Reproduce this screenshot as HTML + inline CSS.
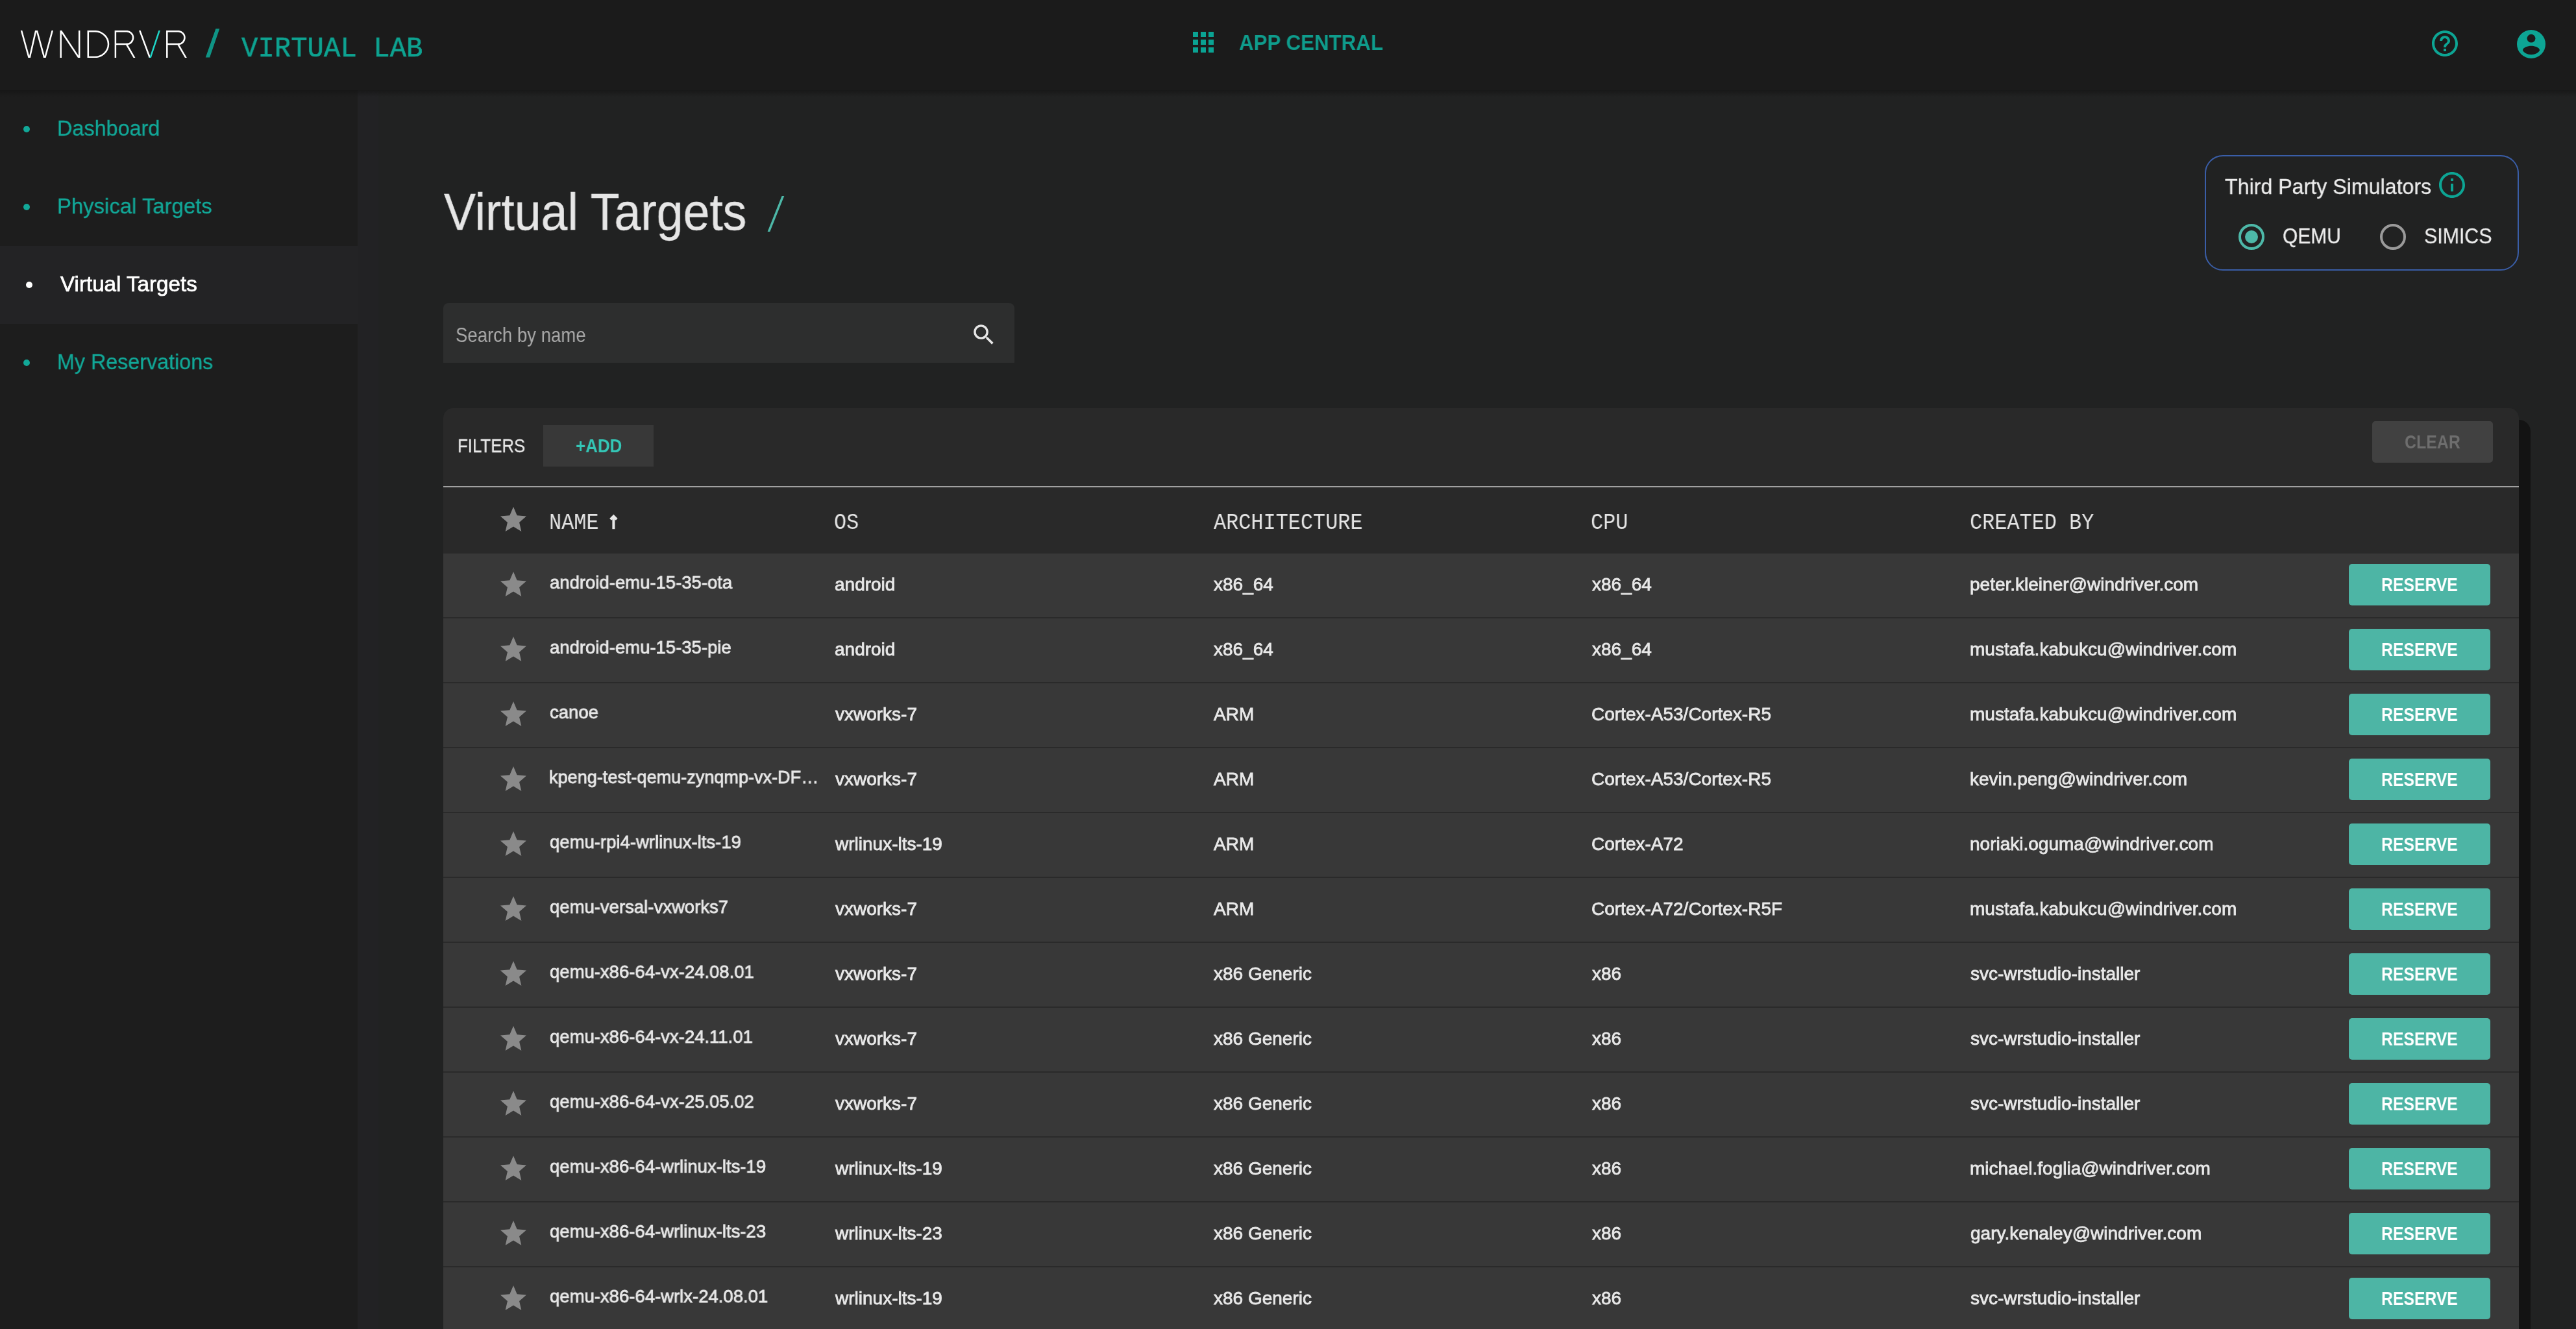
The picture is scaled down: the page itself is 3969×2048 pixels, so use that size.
<!DOCTYPE html>
<html>
<head>
<meta charset="utf-8">
<style>
*{margin:0;padding:0;box-sizing:border-box}
html,body{width:3969px;height:2048px;overflow:hidden;background:#212222;font-family:"Liberation Sans",sans-serif;color:#e8e8e8;position:relative}
.abs{position:absolute}
svg.abs{overflow:visible}
.t{position:absolute;white-space:nowrap;line-height:1;transform-origin:0 0;will-change:transform}
.row{position:absolute;left:683px;width:3198px;height:100px;background:#383838;border-bottom:2px solid #2a2a2a}
.btn{position:absolute;left:3619px;width:218px;height:64px;background:#4db5a5;border-radius:5px}
</style>
</head>
<body>
<!-- header -->
<div class="abs" style="left:0;top:0;width:3969px;height:139px;background:#1b1b1b"></div>
<svg class="abs" style="left:0;top:0" width="400" height="139" viewBox="0 0 400 139">
  <defs><clipPath id="lc"><rect x="0" y="46.9" width="300" height="42.2"/></clipPath></defs>
  <g clip-path="url(#lc)" fill="none" stroke="#ffffff" stroke-width="2.5" stroke-linejoin="miter" stroke-miterlimit="20">
    <path d="M32.2,44 L45.2,91 L56,44 L68.8,91 L81.6,44"/>
    <path d="M93.7,95 V47 L122.2,90 M122.2,95 V40"/>
    <path d="M135.8,48.2 H146 A21,19.9 0 0 1 146,88.0 H135.8 Z"/>
    <path d="M177.9,95 V48.2 H195.3 A9.8,9.9 0 0 1 195.3,68 H177.9 M194.2,67 L207.6,90"/>
    <path d="M214.2,44 L232,92"/>
    <path d="M257.3,95 V48.2 H274.7 A9.8,9.9 0 0 1 274.7,68 H257.3 M273.6,67 L287,90"/>
    <path d="M230.6,92 L246.6,44" stroke="#1fd6c8"/>
  </g>
  <polygon points="332.4,44.2 338.3,44.2 323.1,88.5 316.8,88.5" fill="#0f9485"/>
</svg>
<!-- apps grid icon -->
<svg class="abs" style="left:1837.6px;top:49px" width="32" height="32" viewBox="0 0 32 32" fill="#0aa393">
  <rect x="0" y="0" width="8" height="8"/><rect x="12" y="0" width="8" height="8"/><rect x="24" y="0" width="8" height="8"/>
  <rect x="0" y="12" width="8" height="8"/><rect x="12" y="12" width="8" height="8"/><rect x="24" y="12" width="8" height="8"/>
  <rect x="0" y="24" width="8" height="8"/><rect x="12" y="24" width="8" height="8"/><rect x="24" y="24" width="8" height="8"/>
</svg>
<!-- help icon -->
<svg class="abs" style="left:3743px;top:43px" width="48" height="48" viewBox="0 0 24 24"><path fill="#0da594" d="M11 18h2v-2h-2v2zm1-16C6.48 2 2 6.48 2 12s4.48 10 10 10 10-4.48 10-10S17.52 2 12 2zm0 18c-4.41 0-8-3.59-8-8s3.59-8 8-8 8 3.59 8 8-3.59 8-8 8zm0-14c-2.21 0-4 1.79-4 4h2c0-1.1.9-2 2-2s2 .9 2 2c0 2-3 1.75-3 5h2c0-2.25 3-2.5 3-5 0-2.21-1.79-4-4-4z"/></svg>
<!-- account icon -->
<svg class="abs" style="left:3872px;top:40px" width="56" height="56" viewBox="0 0 56 56">
  <circle cx="28" cy="28" r="22" fill="#0da594"/>
  <circle cx="28" cy="19.2" r="6.4" fill="#1b1b1b"/>
  <path d="M14.8,37 C18,28.5 38,28.5 41.2,37 C38,46.5 18,46.5 14.8,37 Z" fill="#1b1b1b"/>
</svg>
<!-- sidebar -->
<div class="abs" style="left:0;top:139px;width:551px;height:1909px;background:#1d1d1d"></div>
<div class="abs" style="left:0;top:379px;width:551px;height:120px;background:#232325"></div>
<div class="abs" style="left:551px;top:139px;width:32px;height:1909px;background:#222224"></div>
<div class="abs" style="left:0;top:139px;width:3969px;height:10px;background:linear-gradient(rgba(20,20,20,0.7),rgba(20,20,20,0))"></div>
<div class="abs" style="left:35.6px;top:193.6px;width:10.8px;height:10.8px;border-radius:50%;background:#12a898"></div>
<div class="abs" style="left:35.6px;top:313.6px;width:10.8px;height:10.8px;border-radius:50%;background:#12a898"></div>
<div class="abs" style="left:39.6px;top:433.6px;width:10.8px;height:10.8px;border-radius:50%;background:#ffffff"></div>
<div class="abs" style="left:35.6px;top:553.6px;width:10.8px;height:10.8px;border-radius:50%;background:#12a898"></div>
<!-- title slash -->
<svg class="abs" style="left:0;top:0" width="1300" height="400"><polygon points="1204.6,302 1208.3,302 1186.3,357 1182.6,357" fill="#4db8a8"/></svg>
<!-- search -->
<div class="abs" style="left:683px;top:467px;width:880px;height:92px;background:#2d2e2e;border-radius:8px 8px 0 0"></div>
<svg class="abs" style="left:1494.8px;top:495.4px" width="41.8" height="41.8" viewBox="0 0 24 24"><path fill="#e6e6e6" d="M15.5 14h-.79l-.28-.27C15.41 12.59 16 11.11 16 9.5 16 5.91 13.09 3 9.5 3S3 5.91 3 9.5 5.91 16 9.5 16c1.61 0 3.09-.59 4.23-1.57l.27.28v.79l5 4.99L20.49 19l-4.99-5zm-6 0C7.01 14 5 11.99 5 9.5S7.01 5 9.5 5 14 7.01 14 9.5 11.99 14 9.5 14z"/></svg>
<!-- simulators box -->
<div class="abs" style="left:3397px;top:239px;width:484px;height:178px;border:2px solid #3a5ea8;border-radius:28px"></div>
<svg class="abs" style="left:3754px;top:261px" width="48" height="48" viewBox="0 0 24 24"><path fill="#0da594" d="M11 7h2v2h-2zm0 4h2v6h-2zm1-9C6.48 2 2 6.48 2 12s4.48 10 10 10 10-4.48 10-10S17.52 2 12 2zm0 18c-4.41 0-8-3.59-8-8s3.59-8 8-8 8 3.59 8 8-3.59 8-8 8z"/></svg>
<svg class="abs" style="left:3449px;top:345px" width="40" height="40" viewBox="0 0 40 40"><circle cx="20" cy="20" r="18" fill="none" stroke="#4db8a8" stroke-width="4"/><circle cx="20" cy="20" r="10" fill="#4db8a8"/></svg>
<svg class="abs" style="left:3667px;top:345px" width="40" height="40" viewBox="0 0 40 40"><circle cx="20" cy="20" r="18" fill="none" stroke="#9a9a9a" stroke-width="4"/></svg>
<!-- card -->
<div class="abs" style="left:3860px;top:647px;width:39px;height:1402px;background:#131313;border-radius:0 18px 0 0"></div>
<div class="abs" style="left:683px;top:629px;width:3198px;height:1419px;background:#292929;border-radius:15px 15px 0 0"></div>
<div class="abs" style="left:837px;top:655px;width:170px;height:64px;background:#383838"></div>
<div class="abs" style="left:3655px;top:649px;width:186px;height:64px;background:#414141;border-radius:5px"></div>
<div class="abs" style="left:683px;top:749px;width:3198px;height:2px;background:#a0a0a0"></div>
<!-- table -->
<svg class="abs" style="left:766.6px;top:777.0px" width="48" height="48" viewBox="0 0 24 24"><path fill="#8a8a8a" d="M12 17.27L18.18 21l-1.64-7.03L22 9.24l-7.19-.61L12 2 9.19 8.63 2 9.24l5.46 4.73L5.82 21z"/></svg>
<div class="row" style="top:853px"></div>
<div class="btn" style="top:869px"></div>
<svg class="abs" style="left:766.6px;top:877.3px" width="48" height="48" viewBox="0 0 24 24"><path fill="#8a8a8a" d="M12 17.27L18.18 21l-1.64-7.03L22 9.24l-7.19-.61L12 2 9.19 8.63 2 9.24l5.46 4.73L5.82 21z"/></svg>
<div class="row" style="top:953px"></div>
<div class="btn" style="top:969px"></div>
<svg class="abs" style="left:766.6px;top:977.3px" width="48" height="48" viewBox="0 0 24 24"><path fill="#8a8a8a" d="M12 17.27L18.18 21l-1.64-7.03L22 9.24l-7.19-.61L12 2 9.19 8.63 2 9.24l5.46 4.73L5.82 21z"/></svg>
<div class="row" style="top:1053px"></div>
<div class="btn" style="top:1069px"></div>
<svg class="abs" style="left:766.6px;top:1077.3px" width="48" height="48" viewBox="0 0 24 24"><path fill="#8a8a8a" d="M12 17.27L18.18 21l-1.64-7.03L22 9.24l-7.19-.61L12 2 9.19 8.63 2 9.24l5.46 4.73L5.82 21z"/></svg>
<div class="row" style="top:1153px"></div>
<div class="btn" style="top:1169px"></div>
<svg class="abs" style="left:766.6px;top:1177.3px" width="48" height="48" viewBox="0 0 24 24"><path fill="#8a8a8a" d="M12 17.27L18.18 21l-1.64-7.03L22 9.24l-7.19-.61L12 2 9.19 8.63 2 9.24l5.46 4.73L5.82 21z"/></svg>
<div class="row" style="top:1253px"></div>
<div class="btn" style="top:1269px"></div>
<svg class="abs" style="left:766.6px;top:1277.3px" width="48" height="48" viewBox="0 0 24 24"><path fill="#8a8a8a" d="M12 17.27L18.18 21l-1.64-7.03L22 9.24l-7.19-.61L12 2 9.19 8.63 2 9.24l5.46 4.73L5.82 21z"/></svg>
<div class="row" style="top:1353px"></div>
<div class="btn" style="top:1369px"></div>
<svg class="abs" style="left:766.6px;top:1377.3px" width="48" height="48" viewBox="0 0 24 24"><path fill="#8a8a8a" d="M12 17.27L18.18 21l-1.64-7.03L22 9.24l-7.19-.61L12 2 9.19 8.63 2 9.24l5.46 4.73L5.82 21z"/></svg>
<div class="row" style="top:1453px"></div>
<div class="btn" style="top:1469px"></div>
<svg class="abs" style="left:766.6px;top:1477.3px" width="48" height="48" viewBox="0 0 24 24"><path fill="#8a8a8a" d="M12 17.27L18.18 21l-1.64-7.03L22 9.24l-7.19-.61L12 2 9.19 8.63 2 9.24l5.46 4.73L5.82 21z"/></svg>
<div class="row" style="top:1553px"></div>
<div class="btn" style="top:1569px"></div>
<svg class="abs" style="left:766.6px;top:1577.3px" width="48" height="48" viewBox="0 0 24 24"><path fill="#8a8a8a" d="M12 17.27L18.18 21l-1.64-7.03L22 9.24l-7.19-.61L12 2 9.19 8.63 2 9.24l5.46 4.73L5.82 21z"/></svg>
<div class="row" style="top:1653px"></div>
<div class="btn" style="top:1669px"></div>
<svg class="abs" style="left:766.6px;top:1677.3px" width="48" height="48" viewBox="0 0 24 24"><path fill="#8a8a8a" d="M12 17.27L18.18 21l-1.64-7.03L22 9.24l-7.19-.61L12 2 9.19 8.63 2 9.24l5.46 4.73L5.82 21z"/></svg>
<div class="row" style="top:1753px"></div>
<div class="btn" style="top:1769px"></div>
<svg class="abs" style="left:766.6px;top:1777.3px" width="48" height="48" viewBox="0 0 24 24"><path fill="#8a8a8a" d="M12 17.27L18.18 21l-1.64-7.03L22 9.24l-7.19-.61L12 2 9.19 8.63 2 9.24l5.46 4.73L5.82 21z"/></svg>
<div class="row" style="top:1853px"></div>
<div class="btn" style="top:1869px"></div>
<svg class="abs" style="left:766.6px;top:1877.3px" width="48" height="48" viewBox="0 0 24 24"><path fill="#8a8a8a" d="M12 17.27L18.18 21l-1.64-7.03L22 9.24l-7.19-.61L12 2 9.19 8.63 2 9.24l5.46 4.73L5.82 21z"/></svg>
<div class="row" style="top:1953px"></div>
<div class="btn" style="top:1969px"></div>
<svg class="abs" style="left:766.6px;top:1977.3px" width="48" height="48" viewBox="0 0 24 24"><path fill="#8a8a8a" d="M12 17.27L18.18 21l-1.64-7.03L22 9.24l-7.19-.61L12 2 9.19 8.63 2 9.24l5.46 4.73L5.82 21z"/></svg>
<svg class="abs" style="left:0;top:0" width="1000" height="900"><path d="M940.6,800.4 L945.4,795.6 L950.2,800.4 M945.4,796 V815.2" fill="none" stroke="#e8e8e8" stroke-width="4"/></svg>
<div class="t" style="left:372.0px;top:53.2px;font-size:44px;color:#0ea391;transform:scaleX(0.9619);font-family:'Liberation Mono';-webkit-text-stroke:0.6px #0ea391;">VIRTUAL LAB</div>
<div class="t" style="left:1909.1px;top:48.0px;font-size:34px;font-weight:700;color:#0f9c8c;transform:scaleX(0.9208);;">APP CENTRAL</div>
<div class="t" style="left:87.7px;top:181.0px;font-size:33px;color:#12a898;transform:scaleX(0.9809);;-webkit-text-stroke:0.3px #12a898;">Dashboard</div>
<div class="t" style="left:87.6px;top:301.0px;font-size:33px;color:#12a898;transform:scaleX(0.9958);;-webkit-text-stroke:0.3px #12a898;">Physical Targets</div>
<div class="t" style="left:93.3px;top:421.0px;font-size:33px;color:#ffffff;transform:scaleX(1.0048);;-webkit-text-stroke:0.7px #ffffff;">Virtual Targets</div>
<div class="t" style="left:87.7px;top:541.0px;font-size:33px;color:#12a898;transform:scaleX(0.9773);;-webkit-text-stroke:0.3px #12a898;">My Reservations</div>
<div class="t" style="left:683.5px;top:287.0px;font-size:79px;color:#e6e6e6;transform:scaleX(0.9289);;-webkit-text-stroke:0.4px #e6e6e6;">Virtual Targets</div>
<div class="t" style="left:702.3px;top:500.0px;font-size:32px;color:#a9a9a9;transform:scaleX(0.8609);;">Search by name</div>
<div class="t" style="left:3428.1px;top:270.0px;font-size:34px;color:#ececec;transform:scaleX(0.9461);;-webkit-text-stroke:0.3px #ececec;">Third Party Simulators</div>
<div class="t" style="left:3517.1px;top:347.0px;font-size:33px;color:#ececec;transform:scaleX(0.9062);;-webkit-text-stroke:0.3px #ececec;">QEMU</div>
<div class="t" style="left:3735.2px;top:347.0px;font-size:33px;color:#ececec;transform:scaleX(0.9189);;-webkit-text-stroke:0.3px #ececec;">SIMICS</div>
<div class="t" style="left:704.8px;top:672.0px;font-size:30px;color:#e8e8e8;transform:scaleX(0.8610);;-webkit-text-stroke:0.3px #e8e8e8;">FILTERS</div>
<div class="t" style="left:886.8px;top:672.0px;font-size:30px;font-weight:700;color:#34c6b6;transform:scaleX(0.8650);;">+ADD</div>
<div class="t" style="left:3705.2px;top:666.3px;font-size:30px;font-weight:700;color:#6e6e6e;transform:scaleX(0.8294);;">CLEAR</div>
<div class="t" style="left:846.0px;top:789.2px;font-size:35px;color:#e4e4e4;transform:scaleX(0.9110);font-family:'Liberation Mono';">NAME</div>
<div class="t" style="left:1284.9px;top:789.2px;font-size:35px;color:#e4e4e4;transform:scaleX(0.9110);font-family:'Liberation Mono';">OS</div>
<div class="t" style="left:1870.3px;top:789.2px;font-size:35px;color:#e4e4e4;transform:scaleX(0.9110);font-family:'Liberation Mono';">ARCHITECTURE</div>
<div class="t" style="left:2451.2px;top:789.2px;font-size:35px;color:#e4e4e4;transform:scaleX(0.9110);font-family:'Liberation Mono';">CPU</div>
<div class="t" style="left:3034.8px;top:789.2px;font-size:35px;color:#e4e4e4;transform:scaleX(0.9110);font-family:'Liberation Mono';">CREATED BY</div>
<div class="t" style="left:846.5px;top:884.0px;font-size:28px;color:#e8e8e8;transform:scaleX(0.9820);;-webkit-text-stroke:0.8px #e8e8e8;">android-emu-15-35-ota</div>
<div class="t" style="left:1285.7px;top:886.5px;font-size:28px;color:#e8e8e8;;-webkit-text-stroke:0.8px #e8e8e8;">android</div>
<div class="t" style="left:1870.3px;top:886.5px;font-size:28px;color:#e8e8e8;;-webkit-text-stroke:0.8px #e8e8e8;">x86_64</div>
<div class="t" style="left:2453.0px;top:886.5px;font-size:28px;color:#e8e8e8;;-webkit-text-stroke:0.8px #e8e8e8;">x86_64</div>
<div class="t" style="left:3034.6px;top:886.5px;font-size:28px;color:#e8e8e8;;-webkit-text-stroke:0.8px #e8e8e8;">peter.kleiner@windriver.com</div>
<div class="t" style="left:3668.8px;top:886.2px;font-size:30px;font-weight:700;color:#ffffff;transform:scaleX(0.8250);;">RESERVE</div>
<div class="t" style="left:846.5px;top:984.0px;font-size:28px;color:#e8e8e8;transform:scaleX(0.9820);;-webkit-text-stroke:0.8px #e8e8e8;">android-emu-15-35-pie</div>
<div class="t" style="left:1285.7px;top:986.5px;font-size:28px;color:#e8e8e8;;-webkit-text-stroke:0.8px #e8e8e8;">android</div>
<div class="t" style="left:1870.3px;top:986.5px;font-size:28px;color:#e8e8e8;;-webkit-text-stroke:0.8px #e8e8e8;">x86_64</div>
<div class="t" style="left:2453.0px;top:986.5px;font-size:28px;color:#e8e8e8;;-webkit-text-stroke:0.8px #e8e8e8;">x86_64</div>
<div class="t" style="left:3034.6px;top:986.5px;font-size:28px;color:#e8e8e8;;-webkit-text-stroke:0.8px #e8e8e8;">mustafa.kabukcu@windriver.com</div>
<div class="t" style="left:3668.8px;top:986.2px;font-size:30px;font-weight:700;color:#ffffff;transform:scaleX(0.8250);;">RESERVE</div>
<div class="t" style="left:846.5px;top:1084.0px;font-size:28px;color:#e8e8e8;transform:scaleX(0.9820);;-webkit-text-stroke:0.8px #e8e8e8;">canoe</div>
<div class="t" style="left:1286.7px;top:1086.5px;font-size:28px;color:#e8e8e8;;-webkit-text-stroke:0.8px #e8e8e8;">vxworks-7</div>
<div class="t" style="left:1870.3px;top:1086.5px;font-size:28px;color:#e8e8e8;;-webkit-text-stroke:0.8px #e8e8e8;">ARM</div>
<div class="t" style="left:2452.0px;top:1086.5px;font-size:28px;color:#e8e8e8;;-webkit-text-stroke:0.8px #e8e8e8;">Cortex-A53/Cortex-R5</div>
<div class="t" style="left:3034.6px;top:1086.5px;font-size:28px;color:#e8e8e8;;-webkit-text-stroke:0.8px #e8e8e8;">mustafa.kabukcu@windriver.com</div>
<div class="t" style="left:3668.8px;top:1086.2px;font-size:30px;font-weight:700;color:#ffffff;transform:scaleX(0.8250);;">RESERVE</div>
<div class="t" style="left:845.6px;top:1184.0px;font-size:28px;color:#e8e8e8;transform:scaleX(0.9670);;-webkit-text-stroke:0.8px #e8e8e8;">kpeng-test-qemu-zynqmp-vx-DF…</div>
<div class="t" style="left:1286.7px;top:1186.5px;font-size:28px;color:#e8e8e8;;-webkit-text-stroke:0.8px #e8e8e8;">vxworks-7</div>
<div class="t" style="left:1870.3px;top:1186.5px;font-size:28px;color:#e8e8e8;;-webkit-text-stroke:0.8px #e8e8e8;">ARM</div>
<div class="t" style="left:2452.0px;top:1186.5px;font-size:28px;color:#e8e8e8;;-webkit-text-stroke:0.8px #e8e8e8;">Cortex-A53/Cortex-R5</div>
<div class="t" style="left:3034.6px;top:1186.5px;font-size:28px;color:#e8e8e8;;-webkit-text-stroke:0.8px #e8e8e8;">kevin.peng@windriver.com</div>
<div class="t" style="left:3668.8px;top:1186.2px;font-size:30px;font-weight:700;color:#ffffff;transform:scaleX(0.8250);;">RESERVE</div>
<div class="t" style="left:846.5px;top:1284.0px;font-size:28px;color:#e8e8e8;transform:scaleX(0.9820);;-webkit-text-stroke:0.8px #e8e8e8;">qemu-rpi4-wrlinux-lts-19</div>
<div class="t" style="left:1286.7px;top:1286.5px;font-size:28px;color:#e8e8e8;;-webkit-text-stroke:0.8px #e8e8e8;">wrlinux-lts-19</div>
<div class="t" style="left:1870.3px;top:1286.5px;font-size:28px;color:#e8e8e8;;-webkit-text-stroke:0.8px #e8e8e8;">ARM</div>
<div class="t" style="left:2452.0px;top:1286.5px;font-size:28px;color:#e8e8e8;;-webkit-text-stroke:0.8px #e8e8e8;">Cortex-A72</div>
<div class="t" style="left:3034.6px;top:1286.5px;font-size:28px;color:#e8e8e8;;-webkit-text-stroke:0.8px #e8e8e8;">noriaki.oguma@windriver.com</div>
<div class="t" style="left:3668.8px;top:1286.2px;font-size:30px;font-weight:700;color:#ffffff;transform:scaleX(0.8250);;">RESERVE</div>
<div class="t" style="left:846.5px;top:1384.0px;font-size:28px;color:#e8e8e8;transform:scaleX(0.9820);;-webkit-text-stroke:0.8px #e8e8e8;">qemu-versal-vxworks7</div>
<div class="t" style="left:1286.7px;top:1386.5px;font-size:28px;color:#e8e8e8;;-webkit-text-stroke:0.8px #e8e8e8;">vxworks-7</div>
<div class="t" style="left:1870.3px;top:1386.5px;font-size:28px;color:#e8e8e8;;-webkit-text-stroke:0.8px #e8e8e8;">ARM</div>
<div class="t" style="left:2452.0px;top:1386.5px;font-size:28px;color:#e8e8e8;;-webkit-text-stroke:0.8px #e8e8e8;">Cortex-A72/Cortex-R5F</div>
<div class="t" style="left:3034.6px;top:1386.5px;font-size:28px;color:#e8e8e8;;-webkit-text-stroke:0.8px #e8e8e8;">mustafa.kabukcu@windriver.com</div>
<div class="t" style="left:3668.8px;top:1386.2px;font-size:30px;font-weight:700;color:#ffffff;transform:scaleX(0.8250);;">RESERVE</div>
<div class="t" style="left:846.5px;top:1484.0px;font-size:28px;color:#e8e8e8;transform:scaleX(0.9820);;-webkit-text-stroke:0.8px #e8e8e8;">qemu-x86-64-vx-24.08.01</div>
<div class="t" style="left:1286.7px;top:1486.5px;font-size:28px;color:#e8e8e8;;-webkit-text-stroke:0.8px #e8e8e8;">vxworks-7</div>
<div class="t" style="left:1870.3px;top:1486.5px;font-size:28px;color:#e8e8e8;;-webkit-text-stroke:0.8px #e8e8e8;">x86 Generic</div>
<div class="t" style="left:2453.0px;top:1486.5px;font-size:28px;color:#e8e8e8;;-webkit-text-stroke:0.8px #e8e8e8;">x86</div>
<div class="t" style="left:3035.6px;top:1486.5px;font-size:28px;color:#e8e8e8;;-webkit-text-stroke:0.8px #e8e8e8;">svc-wrstudio-installer</div>
<div class="t" style="left:3668.8px;top:1486.2px;font-size:30px;font-weight:700;color:#ffffff;transform:scaleX(0.8250);;">RESERVE</div>
<div class="t" style="left:846.5px;top:1584.0px;font-size:28px;color:#e8e8e8;transform:scaleX(0.9820);;-webkit-text-stroke:0.8px #e8e8e8;">qemu-x86-64-vx-24.11.01</div>
<div class="t" style="left:1286.7px;top:1586.5px;font-size:28px;color:#e8e8e8;;-webkit-text-stroke:0.8px #e8e8e8;">vxworks-7</div>
<div class="t" style="left:1870.3px;top:1586.5px;font-size:28px;color:#e8e8e8;;-webkit-text-stroke:0.8px #e8e8e8;">x86 Generic</div>
<div class="t" style="left:2453.0px;top:1586.5px;font-size:28px;color:#e8e8e8;;-webkit-text-stroke:0.8px #e8e8e8;">x86</div>
<div class="t" style="left:3035.6px;top:1586.5px;font-size:28px;color:#e8e8e8;;-webkit-text-stroke:0.8px #e8e8e8;">svc-wrstudio-installer</div>
<div class="t" style="left:3668.8px;top:1586.2px;font-size:30px;font-weight:700;color:#ffffff;transform:scaleX(0.8250);;">RESERVE</div>
<div class="t" style="left:846.5px;top:1684.0px;font-size:28px;color:#e8e8e8;transform:scaleX(0.9820);;-webkit-text-stroke:0.8px #e8e8e8;">qemu-x86-64-vx-25.05.02</div>
<div class="t" style="left:1286.7px;top:1686.5px;font-size:28px;color:#e8e8e8;;-webkit-text-stroke:0.8px #e8e8e8;">vxworks-7</div>
<div class="t" style="left:1870.3px;top:1686.5px;font-size:28px;color:#e8e8e8;;-webkit-text-stroke:0.8px #e8e8e8;">x86 Generic</div>
<div class="t" style="left:2453.0px;top:1686.5px;font-size:28px;color:#e8e8e8;;-webkit-text-stroke:0.8px #e8e8e8;">x86</div>
<div class="t" style="left:3035.6px;top:1686.5px;font-size:28px;color:#e8e8e8;;-webkit-text-stroke:0.8px #e8e8e8;">svc-wrstudio-installer</div>
<div class="t" style="left:3668.8px;top:1686.2px;font-size:30px;font-weight:700;color:#ffffff;transform:scaleX(0.8250);;">RESERVE</div>
<div class="t" style="left:846.5px;top:1784.0px;font-size:28px;color:#e8e8e8;transform:scaleX(0.9820);;-webkit-text-stroke:0.8px #e8e8e8;">qemu-x86-64-wrlinux-lts-19</div>
<div class="t" style="left:1286.7px;top:1786.5px;font-size:28px;color:#e8e8e8;;-webkit-text-stroke:0.8px #e8e8e8;">wrlinux-lts-19</div>
<div class="t" style="left:1870.3px;top:1786.5px;font-size:28px;color:#e8e8e8;;-webkit-text-stroke:0.8px #e8e8e8;">x86 Generic</div>
<div class="t" style="left:2453.0px;top:1786.5px;font-size:28px;color:#e8e8e8;;-webkit-text-stroke:0.8px #e8e8e8;">x86</div>
<div class="t" style="left:3034.6px;top:1786.5px;font-size:28px;color:#e8e8e8;;-webkit-text-stroke:0.8px #e8e8e8;">michael.foglia@windriver.com</div>
<div class="t" style="left:3668.8px;top:1786.2px;font-size:30px;font-weight:700;color:#ffffff;transform:scaleX(0.8250);;">RESERVE</div>
<div class="t" style="left:846.5px;top:1884.0px;font-size:28px;color:#e8e8e8;transform:scaleX(0.9820);;-webkit-text-stroke:0.8px #e8e8e8;">qemu-x86-64-wrlinux-lts-23</div>
<div class="t" style="left:1286.7px;top:1886.5px;font-size:28px;color:#e8e8e8;;-webkit-text-stroke:0.8px #e8e8e8;">wrlinux-lts-23</div>
<div class="t" style="left:1870.3px;top:1886.5px;font-size:28px;color:#e8e8e8;;-webkit-text-stroke:0.8px #e8e8e8;">x86 Generic</div>
<div class="t" style="left:2453.0px;top:1886.5px;font-size:28px;color:#e8e8e8;;-webkit-text-stroke:0.8px #e8e8e8;">x86</div>
<div class="t" style="left:3035.6px;top:1886.5px;font-size:28px;color:#e8e8e8;;-webkit-text-stroke:0.8px #e8e8e8;">gary.kenaley@windriver.com</div>
<div class="t" style="left:3668.8px;top:1886.2px;font-size:30px;font-weight:700;color:#ffffff;transform:scaleX(0.8250);;">RESERVE</div>
<div class="t" style="left:846.5px;top:1984.0px;font-size:28px;color:#e8e8e8;transform:scaleX(0.9820);;-webkit-text-stroke:0.8px #e8e8e8;">qemu-x86-64-wrlx-24.08.01</div>
<div class="t" style="left:1286.7px;top:1986.5px;font-size:28px;color:#e8e8e8;;-webkit-text-stroke:0.8px #e8e8e8;">wrlinux-lts-19</div>
<div class="t" style="left:1870.3px;top:1986.5px;font-size:28px;color:#e8e8e8;;-webkit-text-stroke:0.8px #e8e8e8;">x86 Generic</div>
<div class="t" style="left:2453.0px;top:1986.5px;font-size:28px;color:#e8e8e8;;-webkit-text-stroke:0.8px #e8e8e8;">x86</div>
<div class="t" style="left:3035.6px;top:1986.5px;font-size:28px;color:#e8e8e8;;-webkit-text-stroke:0.8px #e8e8e8;">svc-wrstudio-installer</div>
<div class="t" style="left:3668.8px;top:1986.2px;font-size:30px;font-weight:700;color:#ffffff;transform:scaleX(0.8250);;">RESERVE</div>
</body>
</html>
